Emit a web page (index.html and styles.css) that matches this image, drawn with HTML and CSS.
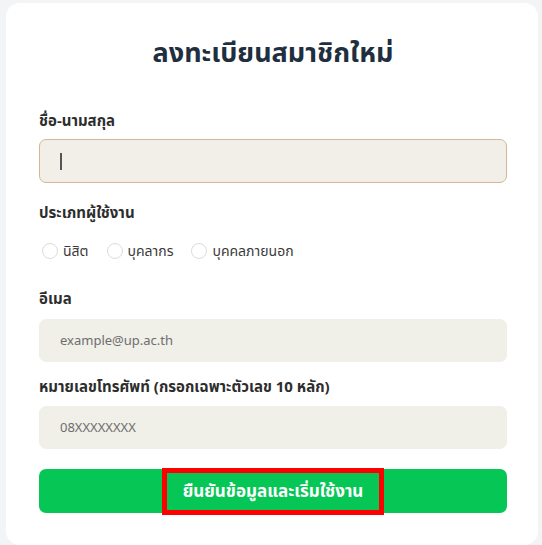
FILE: index.html
```html
<!DOCTYPE html>
<html lang="th">
<head>
<meta charset="utf-8">
<title>ลงทะเบียนสมาชิกใหม่</title>
<link rel="stylesheet" href="styles.css">
</head>
<body>
<main class="card">
  <h1 class="title">ลงทะเบียนสมาชิกใหม่</h1>

  <div class="label label-first">ชื่อ-นามสกุล</div>
  <div class="input input-focus"><span class="caret"></span></div>

  <div class="label label-after-input">ประเภทผู้ใช้งาน</div>
  <div class="radios">
    <label class="radio"><span class="dot"></span><span class="radio-text">นิสิต</span></label>
    <label class="radio"><span class="dot"></span><span class="radio-text">บุคลากร</span></label>
    <label class="radio"><span class="dot"></span><span class="radio-text">บุคคลภายนอก</span></label>
  </div>

  <div class="label label-after-radios">อีเมล</div>
  <div class="input"><span class="placeholder">example@up.ac.th</span></div>

  <div class="label label-after-input2">หมายเลขโทรศัพท์ (กรอกเฉพาะตัวเลข 10 หลัก)</div>
  <div class="input"><span class="placeholder">08XXXXXXXX</span></div>

  <button class="submit" type="button"><span class="submit-text">ยืนยันข้อมูลและเริ่มใช้งาน</span></button>
</main>
</body>
</html>
```

FILE: styles.css
```css
html, body {
  margin: 0;
  height: 100%;
}
body {
  background: #f3f4f6;
  padding: 3px 4px 0 6px;
  box-sizing: border-box;
  font-family: "Noto Sans Thai", "Noto Sans", "Liberation Sans", sans-serif;
  color: #2b2b2b;
}
.card {
  background: #ffffff;
  border-radius: 14px;
  padding: 31px 31px 30px 33px;
  min-height: 100%;
  box-sizing: border-box;
  display: flex;
  flex-direction: column;
}
.title {
  margin: 0;
  text-align: center;
  font-size: 27px;
  line-height: 40px;
  font-weight: 700;
  color: #1f2f40;
}
.label {
  font-size: 15px;
  line-height: 20px;
  font-weight: 700;
  color: #2d2d2d;
  margin-bottom: 7px;
}
.label-first { margin-top: 38px; }
.label-after-input { margin-top: 21px; margin-bottom: 17px; }
.label-after-radios { margin-top: 29px; margin-bottom: 9px; }
.label-after-input2 { margin-top: 16px; margin-bottom: 8px; }
.input {
  height: 43px;
  background: #f0efe8;
  border-radius: 7px;
  border: 1px solid #f0efe8;
  box-sizing: border-box;
  display: flex;
  align-items: center;
  padding-left: 20px;
}
.input-focus {
  height: 44px;
  border-color: #d6b790;
  background: #f1efe8;
}
.caret {
  width: 2px;
  height: 17px;
  background: #555;
}
.placeholder {
  font-size: 13px;
  color: #6e6e6e;
}
.radios {
  display: flex;
  align-items: center;
  height: 20px;
  padding-left: 3px;
}
.radio {
  display: flex;
  align-items: center;
  margin-right: 18px;
}
.dot {
  width: 16px;
  height: 16px;
  border-radius: 50%;
  border: 1px solid #dcdcdc;
  box-sizing: border-box;
  background: #fff;
  margin-right: 5px;
}
.radio-text {
  font-size: 14px;
  color: #3a3a3a;
}
.submit {
  margin-top: 20px;
  height: 44px;
  border: none;
  border-radius: 7px;
  background: #06c755;
  display: flex;
  align-items: center;
  justify-content: center;
  font-family: inherit;
  padding: 0;
}
.submit-text {
  color: #ffffff;
  font-size: 17px;
  font-weight: 700;
  border: 5px solid #ff0000;
  height: 47px;
  box-sizing: border-box;
  display: flex;
  align-items: center;
  padding: 0 16px;
  margin-top: 1px;
}
```
